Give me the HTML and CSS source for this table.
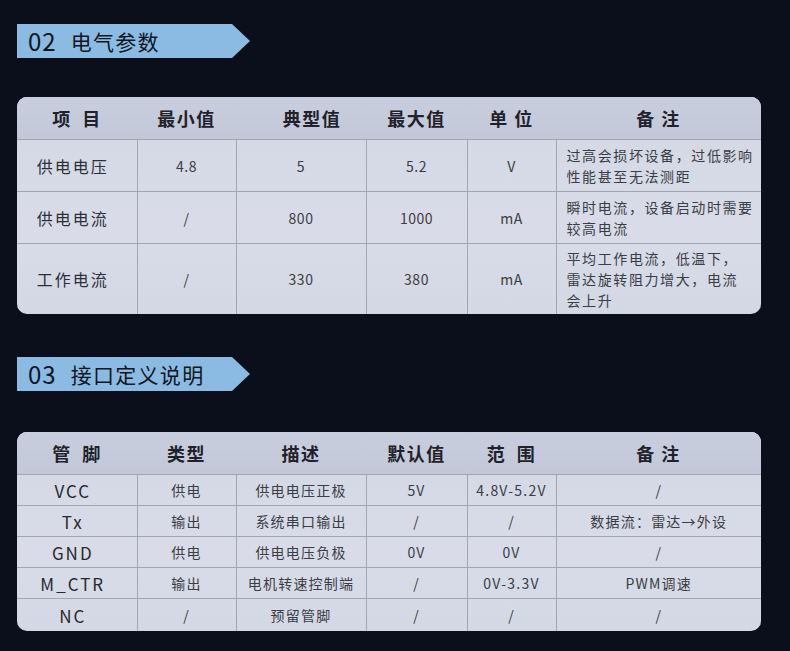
FILE: index.html
```html
<!DOCTYPE html>
<html lang="zh-CN">
<head>
<meta charset="utf-8">
<title>电气参数 / 接口定义说明</title>
<link rel="stylesheet" href="styles.css">
</head>
<body>
<main class="page">
  <section class="sec sec-first">
    <h2 class="banner"><span class="num">02</span><span class="title">电气参数</span></h2>
    <div class="card">
      <table class="grid">
        <colgroup>
          <col class="c1"><col class="c2"><col class="c3"><col class="c4"><col class="c5"><col class="c6">
        </colgroup>
        <thead>
          <tr><th>项&ensp;目</th><th>最小值</th><th class="shift">典型值</th><th>最大值</th><th>单&nbsp;位</th><th>备&nbsp;注</th></tr>
        </thead>
        <tbody class="spec">
          <tr>
            <td class="name">供电电压</td><td>4.8</td><td>5</td><td>5.2</td><td>V</td>
            <td class="note">过高会损坏设备，过低影响性能甚至无法测距</td>
          </tr>
          <tr>
            <td class="name">供电电流</td><td>/</td><td>800</td><td>1000</td><td>mA</td>
            <td class="note">瞬时电流，设备启动时需要较高电流</td>
          </tr>
          <tr class="tall">
            <td class="name">工作电流</td><td>/</td><td>330</td><td>380</td><td>mA</td>
            <td class="note">平均工作电流，低温下，<br>雷达旋转阻力增大，电流<br>会上升</td>
          </tr>
        </tbody>
      </table>
    </div>
  </section>

  <section class="sec sec-second">
    <h2 class="banner"><span class="num">03</span><span class="title">接口定义说明</span></h2>
    <div class="card">
      <table class="grid">
        <colgroup>
          <col class="c1"><col class="c2"><col class="c3"><col class="c4"><col class="c5"><col class="c6">
        </colgroup>
        <thead>
          <tr><th>管&ensp;脚</th><th>类型</th><th>描述</th><th>默认值</th><th>范&ensp;围</th><th>备&nbsp;注</th></tr>
        </thead>
        <tbody class="pins">
          <tr><td class="pin">VCC</td><td>供电</td><td>供电电压正极</td><td>5V</td><td>4.8V-5.2V</td><td>/</td></tr>
          <tr><td class="pin">Tx</td><td>输出</td><td>系统串口输出</td><td>/</td><td>/</td><td>数据流：雷达→外设</td></tr>
          <tr><td class="pin">GND</td><td>供电</td><td>供电电压负极</td><td>0V</td><td>0V</td><td>/</td></tr>
          <tr><td class="pin">M_CTR</td><td>输出</td><td>电机转速控制端</td><td>/</td><td>0V-3.3V</td><td>PWM调速</td></tr>
          <tr class="last"><td class="pin">NC</td><td>/</td><td>预留管脚</td><td>/</td><td>/</td><td>/</td></tr>
        </tbody>
      </table>
    </div>
  </section>
</main>
</body>
</html>
```

FILE: styles.css
```css
html, body {
  margin: 0;
  padding: 0;
  background: #0b0e1b;
}

.page {
  width: 790px;
  height: 651px;
  box-sizing: border-box;
  padding: 24px 29px 0 17px;
  background: #0b0e1b;
  font-family: "Noto Sans CJK SC", "Noto Sans", sans-serif;
  overflow: hidden;
}

.sec-second {
  margin-top: 43px;
}

.banner {
  margin: 0;
  width: 233px;
  height: 34px;
  box-sizing: border-box;
  display: flex;
  align-items: center;
  padding-left: 11px;
  background: #8bbbe3;
  clip-path: polygon(0 0, 215px 0, 100% 50%, 215px 100%, 0 100%);
  color: #0f1522;
  font-weight: 400;
  font-size: 21px;
  line-height: 1;
}

.banner .num {
  font-size: 24px;
  letter-spacing: 1px;
  margin-right: 14px;
}

.banner .title {
  letter-spacing: 1.3px;
}

.card {
  margin-top: 39px;
  width: 744px;
  border-radius: 10px;
  overflow: hidden;
  background: linear-gradient(180deg, #d3d7e4 0%, #d9dce8 60%, #d4d8e5 100%);
  box-shadow: 0 1px 0 #e6e8ef inset;
}

.sec-second .card {
  margin-top: 41px;
}

.grid {
  width: 744px;
  border-collapse: collapse;
  table-layout: fixed;
}

.c1 { width: 120px; }
.c2 { width: 99px; }
.c3 { width: 130px; }
.c4 { width: 101px; }
.c5 { width: 89px; }
.c6 { width: 205px; }

.grid thead th {
  height: 42px;
  padding: 0;
  background: linear-gradient(180deg, #c9cede 0%, #c3c8d9 100%);
  border-bottom: 1px solid #a2a6b1;
  color: #1f222a;
  font-size: 18px;
  font-weight: 700;
  letter-spacing: 1.5px;
  text-align: center;
}

.grid thead th.shift {
  padding-left: 22px;
}

.grid td {
  padding: 0;
  border: 1px solid #a2a6b1;
  text-align: center;
  vertical-align: middle;
  color: #3a3d45;
  font-size: 14px;
  letter-spacing: 0.5px;
}

.grid tr td:first-child { border-left: none; }
.grid tr td:last-child { border-right: none; }
.grid tbody tr:last-child td { border-bottom: none; }

.spec td {
  height: 51px;
}

.spec tr.tall td {
  height: 70px;
}

.spec td.name {
  font-size: 16px;
  letter-spacing: 2px;
  color: #2c2f37;
  padding-right: 8px;
}

.spec td.note {
  text-align: left;
  padding-left: 10px;
  padding-right: 4px;
  font-size: 14px;
  line-height: 21px;
  letter-spacing: 1.6px;
}

.pins td {
  height: 30px;
  letter-spacing: 1.2px;
  line-height: 20px;
}

.pins tr.last td {
  height: 32px;
}

.pins td.pin {
  font-size: 17px;
  letter-spacing: 2px;
  color: #26292f;
  padding-right: 8px;
  padding-top: 2px;
  height: 28px;
}

.pins tr.last td.pin {
  height: 30px;
}
```
